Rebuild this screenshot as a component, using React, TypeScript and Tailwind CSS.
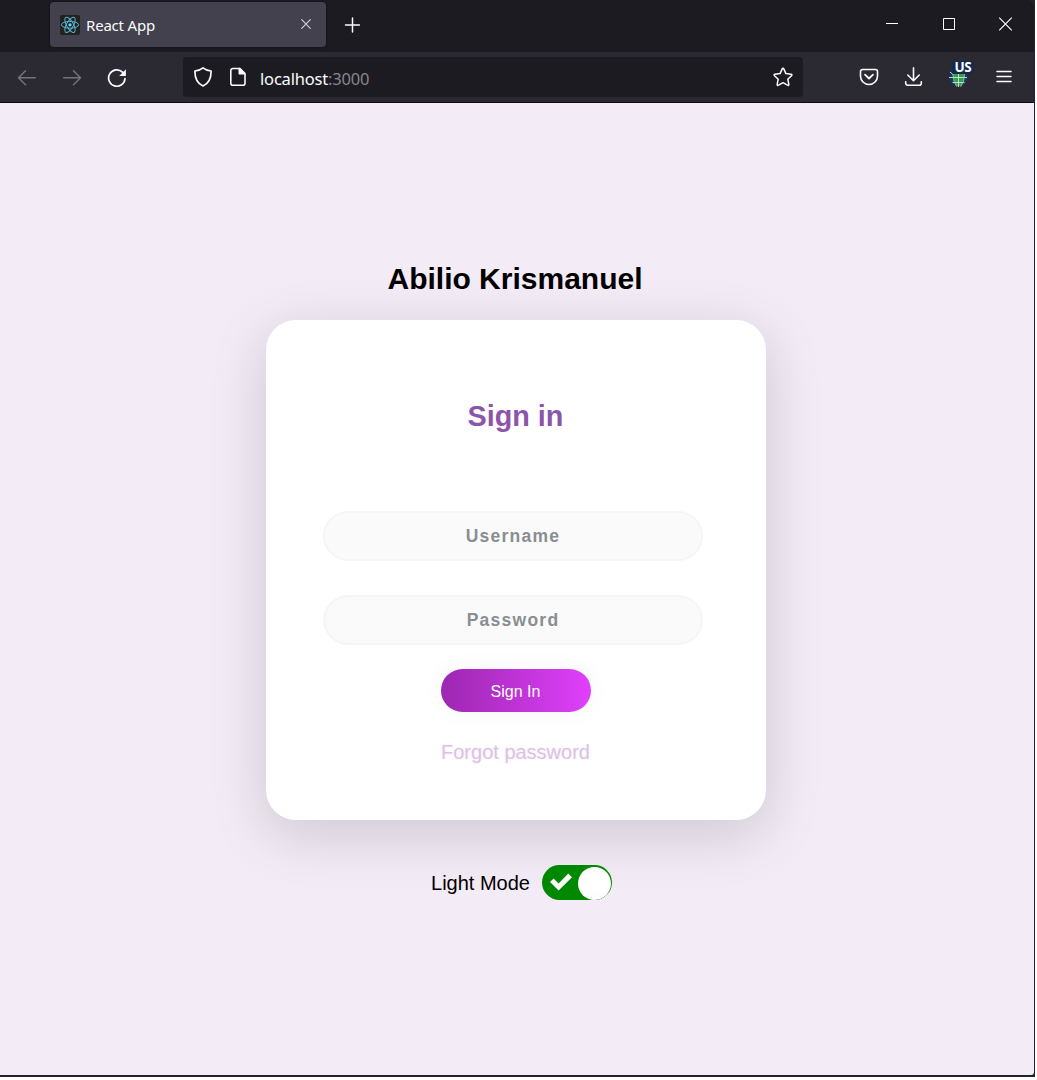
import React from "react";

const iconProps = {
  fill: "none",
  stroke: "#fbfbfe",
  strokeWidth: 1.5,
  strokeLinecap: "round" as const,
  strokeLinejoin: "round" as const,
};

function ReactLogo() {
  return (
    <svg className="size-5 rounded-[2px] bg-[#222222]" viewBox="0 0 20 20" fill="none" stroke="#55b5cc" strokeWidth="1">
      <ellipse cx="10" cy="9.8" rx="8.6" ry="3.4" />
      <ellipse cx="10" cy="9.8" rx="8.6" ry="3.4" transform="rotate(60 10 9.8)" />
      <ellipse cx="10" cy="9.8" rx="8.6" ry="3.4" transform="rotate(120 10 9.8)" />
      <circle cx="10" cy="9.8" r="1.6" fill="#61dafb" stroke="none" />
    </svg>
  );
}

function TabBar() {
  return (
    <div className="flex h-[52px] items-start bg-[#1c1b22] pl-[50px]">
      <div className="mt-[2px] flex h-[45px] w-[276px] items-center rounded-[4px] bg-[#42414d] pl-[10px] shadow-[0_0_3px_rgba(0,0,0,0.5)]">
        <ReactLogo />
        <span className="ml-[6px] mt-[2px] flex-1 text-[15px] tracking-[-0.2px] text-[#fbfbfe]">React App</span>
        <svg className="mb-[1px] mr-[14px] size-3" viewBox="0 0 12 12" {...iconProps} stroke="#d0d0d8" strokeWidth="1.2">
          <path d="M1.700 1.700l8.600 8.600M10.300 1.700l-8.600 8.600" />
        </svg>
      </div>
      <svg className="ml-[18px] mt-[17px] size-4" viewBox="0 0 16 16" {...iconProps}>
        <path d="M8.500 1v14M1.500 8h14" />
      </svg>
      <div className="ml-auto mr-[21px] mt-[17px] flex items-center gap-[43px]">
        <svg className="size-[14px]" viewBox="0 0 14 14" fill="none" stroke="#fff">
          <path d="M1 6.500h12" />
        </svg>
        <svg className="size-[14px]" viewBox="0 0 14 14" fill="none" stroke="#fff">
          <path d="M1.500 1.500h11v11h-11z" />
        </svg>
        <svg className="size-[14px]" viewBox="0 0 14 14" fill="none" stroke="#fff" strokeWidth="1.1">
          <path d="M.2.700l12.600 12.600M12.800.700L.2 13.300" />
        </svg>
      </div>
    </div>
  );
}

function NavBar() {
  return (
    <div className="flex h-[51px] items-start border-b border-[#0c0c0d] bg-[#2b2a33] pl-[17px] pt-[5px]">
      <div className="flex h-10 w-[166px] items-center gap-[25px] pt-[2px]">
        <svg className="size-5" viewBox="0 0 20 20" {...iconProps} stroke="#74737b">
          <path d="M18.300 9.700H1.700M8.500 2.700l-7 7 7 7" />
        </svg>
        <svg className="size-5" viewBox="0 0 20 20" {...iconProps} stroke="#74737b">
          <path d="M1.700 9.700h16.600M11.500 2.700l7 7-7 7" />
        </svg>
        <svg className="size-5" viewBox="0 0 20 20" {...iconProps} strokeWidth="1.700">
          <path d="M15.500 4.100A8.200 8.200 0 1 0 18 10.500" />
          <path d="M18.900 1.200v6.700h-6.700z" fill="#fbfbfe" stroke="none" />
        </svg>
      </div>
      <div className="flex h-10 w-[620px] items-center rounded-[4px] bg-[#1c1b22] pl-[10px] pr-[10px]">
        <svg className="size-5" viewBox="0 0 20 20" {...iconProps} strokeWidth="1.700">
          <path d="M10 .900c2.500 2.100 5.300 2.900 8.100 3.100.1 7.100-2 12.200-8.100 15C3.900 16.200 1.800 11.100 1.900 4 4.700 3.800 7.500 3 10 .900z" />
        </svg>
        <svg className="ml-[15px] size-5" viewBox="0 0 20 20" {...iconProps} strokeWidth="1.600">
          <path d="M4.800 1.500h7.200l5 5v9.700a2 2 0 0 1-2 2H4.800a2 2 0 0 1-2-2V3.500a2 2 0 0 1 2-2z" />
          <path d="M11.300 1.500v5.200h5.200z" fill="#fbfbfe" />
        </svg>
        <span className="ml-[12px] mt-[5px] flex-1 text-[16.500px] tracking-[-0.180px] text-[#fbfbfe]">
          localhost<span className="text-[#87868e]">:3000</span>
        </span>
        <svg className="size-5" viewBox="0 0 20 20" {...iconProps}>
          <path d="M10 1.200q.5 0 .8.700l2.100 4.700 5.100.6q1.600.300.5 1.500l-3.700 3.500 1 5q.100 1.700-1.300 1L10 15.700l-4.500 2.500q-1.400.7-1.300-1l1-5L1.500 8.700Q.4 7.500 2 7.200l5.100-.6 2.100-4.700q.3-.7.8-.7z" />
        </svg>
      </div>
      <div className="ml-auto mr-[21px] flex h-10 items-center">
        <svg className="size-5" viewBox="0 0 20 20" {...iconProps} strokeWidth="1.600">
          <path d="M3.500 2.500h13a2 2 0 0 1 2 2V9a8.500 8.500 0 0 1-17 0V4.500a2 2 0 0 1 2-2z" />
          <path d="M6 7.600l4 3.900 4-3.900" strokeWidth="1.800" />
        </svg>
        <svg className="ml-[24px] size-5" viewBox="0 0 20 20" {...iconProps} strokeWidth="1.600">
          <path d="M10.500.8v12.500M4.800 8l5.700 5.700L16.200 8M2.700 14.800v1.400a2 2 0 0 0 2 2h11.600a2 2 0 0 0 2-2v-1.400" />
        </svg>
        <div className="relative ml-[26px] h-[32px] w-6">
          <svg className="absolute left-0 top-[8px] h-5 w-5" viewBox="0 0 20 20" fill="none">
            <circle cx="9.500" cy="8.500" r="9" fill="#1b3763" />
            <path d="M3.500 5h12.500q0 7-3.500 12H7Q3.500 12 3.500 5z" fill="#35a047" />
            <path d="M1 3l3 2.500M0 8.500h18M9.500 4v14M3.500 13.500h12" stroke="#d3e3e0" strokeWidth=".9" />
            <path d="M4 5q0 8 4 13M15.500 5q0 8-4 13" stroke="#9fc3c4" strokeWidth=".7" />
          </svg>
          <span className="absolute left-[3px] top-0 flex h-[13px] w-[22px] items-center justify-center rounded-[2px] bg-[#16294d] font-['Open_Sans','Noto_Sans',sans-serif] text-[13.500px] font-bold leading-none tracking-[-0.300px] text-white">
            US
          </span>
        </div>
        <svg className="ml-[22px] size-[18px]" viewBox="0 0 18 18" {...iconProps}>
          <path d="M2 3.500h14M2 8.500h14M2 13.500h14" />
        </svg>
      </div>
    </div>
  );
}

const inputClass =
  "block h-[50px] w-[380px] rounded-[25px] border-2 border-black/2 bg-[rgba(136,126,126,0.04)] text-center text-[17.5px] font-bold tracking-[1.25px] text-[#263238] outline-none placeholder:text-[#888e91] placeholder:opacity-100";

function SignInCard() {
  return (
    <form
      onSubmit={(e) => e.preventDefault()}
      className="mt-[24px] flex size-[500px] flex-col items-center rounded-[30px] bg-white shadow-[0_14px_55px_3px_rgba(0,0,0,0.14)]"
    >
      <h2 className="mr-px mt-[79px] text-[28.75px] font-bold leading-[34px] text-[#8c55aa]">Sign in</h2>
      <div className="mr-[6px] mt-[78px] flex flex-col gap-[34px]">
        <input className={inputClass} placeholder="Username" aria-label="Username" />
        <input className={inputClass} type="password" placeholder="Password" aria-label="Password" />
      </div>
      <button className="mt-[24px] h-[43px] w-[150px] rounded-full bg-[linear-gradient(to_right,#9c27b0,#e040fb)] pr-px pt-[2px] text-base text-white shadow-[0_0_25px_1px_rgba(0,0,0,0.04)]">
        Sign In
      </button>
      <a className="mr-px mt-[28px] text-[20px] leading-6 text-[#e1bee7] [text-shadow:0_0_3px_rgba(117,117,117,0.12)]">
        Forgot password
      </a>
    </form>
  );
}

function ModeSwitch() {
  return (
    <div className="ml-[11px] mt-[45px] flex h-[35px] items-center gap-3">
      <span className="text-[20px] leading-6 text-black">Light Mode</span>
      <button aria-label="Light Mode" className="flex h-[35px] w-[70px] items-center overflow-hidden rounded-full bg-[#008800] pl-[8px]">
        <svg className="mb-[2px] h-[18px] w-[22px]" viewBox="0 0 22 18">
          <path d="M0 9l3.600-3.600 5 5L18.300.6 22 4.200 8.600 17.600z" fill="#fff" />
        </svg>
        <span className="ml-[6px] mt-[2px] size-[33px] rounded-full bg-white" />
      </button>
    </div>
  );
}

export default function App() {
  return (
    <div className="h-[1080px] w-[1037px] overflow-hidden bg-white font-['Liberation_Sans',Arial,sans-serif]">
      <div className="flex h-[1077px] w-[1035px] flex-col overflow-hidden border-b-2 border-r border-[#25242b] bg-[#25242b]">
        <div className="overflow-hidden rounded-tr-[7px] font-['Noto_Sans',sans-serif]">
          <TabBar />
          <NavBar />
        </div>
        <main className="flex flex-1 flex-col items-center rounded-br-[3px] bg-[#f3ebf6] pr-[2px] pt-[159px]">
          <h1 className="mr-[2px] text-[30px] font-bold leading-[34px] text-black">Abilio Krismanuel</h1>
          <SignInCard />
          <ModeSwitch />
        </main>
      </div>
    </div>
  );
}
